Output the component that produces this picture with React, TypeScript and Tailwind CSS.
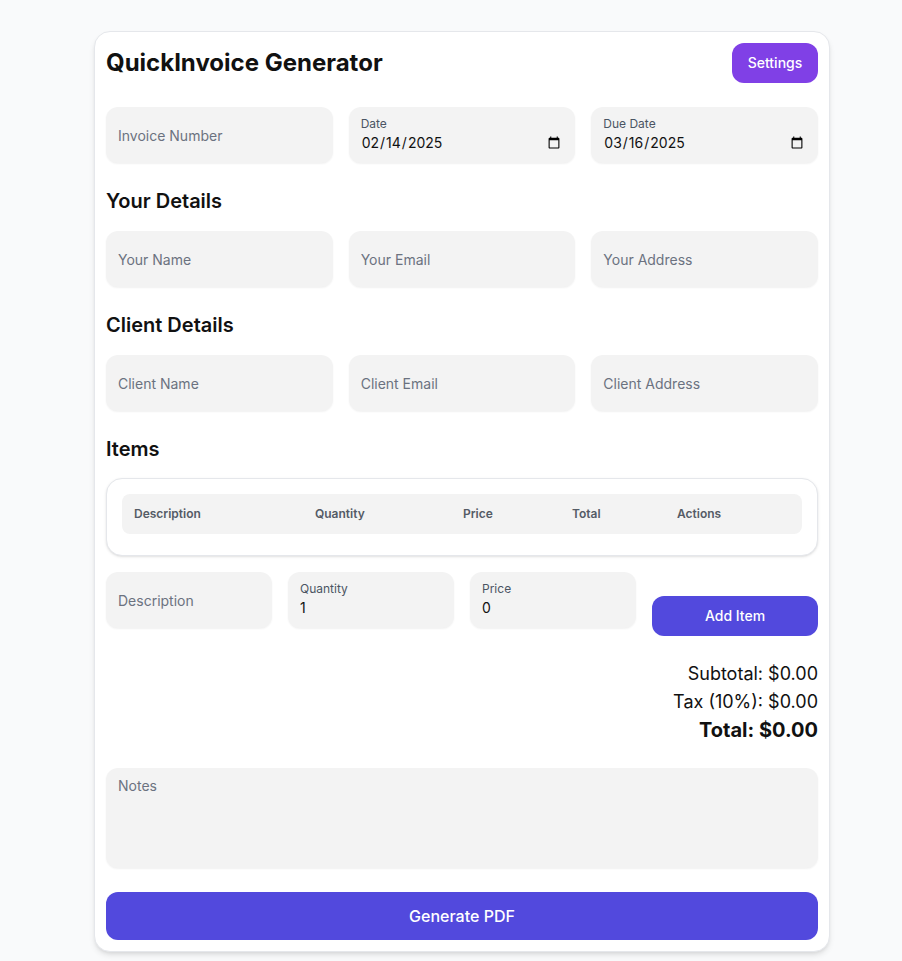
import React from "react";

const inputBox =
  "h-14 w-full rounded-xl bg-[#f3f3f3] shadow-[0_1px_2px_rgba(0,0,0,0.06)] px-3 text-sm text-[#111] placeholder:text-[#6b7280] outline-none";

function LabeledInput({ label, type, value }: { label: string; type: string; value: string }) {
  return (
    <div className="h-14 w-full rounded-xl bg-[#f3f3f3] shadow-[0_1px_2px_rgba(0,0,0,0.06)] px-3 pt-[9px] flex flex-col gap-[1px]">
      <label className="text-xs leading-4 text-[#4b5563]">{label}</label>
      <input
        type={type}
        defaultValue={value}
        className="bg-transparent text-sm leading-5 text-[#111] outline-none w-full"
      />
    </div>
  );
}

export default function App() {
  return (
    <div
      className="min-h-screen bg-[#f9fafb] pt-[31px]"
      style={{ fontFamily: "Inter, 'Noto Sans', sans-serif" }}
    >
      <div className="ml-[94px] w-[736px] rounded-2xl bg-white border border-[#e5e7eb] shadow-md px-[11px] pt-[11px] pb-[11px] flex flex-col gap-6">
        <div className="flex items-center justify-between">
          <h1 className="text-2xl font-bold text-[#111]">QuickInvoice Generator</h1>
          <button className="h-10 w-[86px] rounded-xl bg-[#8040e6] text-white text-sm font-medium">
            Settings
          </button>
        </div>

        <div className="grid grid-cols-3 gap-4">
          <input className={inputBox} placeholder="Invoice Number" />
          <LabeledInput label="Date" type="date" value="2025-02-14" />
          <LabeledInput label="Due Date" type="date" value="2025-03-16" />
        </div>

        <div className="flex flex-col gap-4">
          <h2 className="text-xl font-semibold text-[#111]">Your Details</h2>
          <div className="grid grid-cols-3 gap-4">
            <input className={inputBox} placeholder="Your Name" />
            <input className={inputBox} placeholder="Your Email" />
            <input className={inputBox} placeholder="Your Address" />
          </div>
        </div>

        <div className="flex flex-col gap-4">
          <h2 className="text-xl font-semibold text-[#111]">Client Details</h2>
          <div className="grid grid-cols-3 gap-4">
            <input className={inputBox} placeholder="Client Name" />
            <input className={inputBox} placeholder="Client Email" />
            <input className={inputBox} placeholder="Client Address" />
          </div>
        </div>

        <div className="flex flex-col gap-4">
          <h2 className="text-xl font-semibold text-[#111] -mb-[1px]">Items</h2>
          <div className="rounded-2xl border border-[#e5e7eb] bg-white shadow-sm p-[15px] pb-[21px]">
            <div className="grid grid-cols-[181px_148px_109px_105px_137px] h-10 items-center rounded-lg bg-[#f3f3f3] text-xs font-semibold text-[#555b66]">
              <div className="px-3">Description</div>
              <div className="px-3">Quantity</div>
              <div className="px-3">Price</div>
              <div className="px-3">Total</div>
              <div className="px-3">Actions</div>
            </div>
          </div>
          <div className="grid grid-cols-4 gap-4">
            <input className={inputBox} placeholder="Description" />
            <LabeledInput label="Quantity" type="number" value="1" />
            <LabeledInput label="Price" type="number" value="0" />
            <button className="mt-6 h-10 rounded-xl bg-[#5249dd] text-white text-sm font-medium">
              Add Item
            </button>
          </div>
        </div>

        <div className="flex flex-col items-end text-[#111]">
          <div className="text-lg leading-7">Subtotal: $0.00</div>
          <div className="text-lg leading-7">Tax (10%): $0.00</div>
          <div className="text-xl leading-7 font-bold">Total: $0.00</div>
        </div>

        <textarea
          className="h-[100px] w-full resize-none rounded-xl bg-[#f3f3f3] shadow-[0_1px_2px_rgba(0,0,0,0.06)] px-3 py-2 text-sm text-[#111] placeholder:text-[#6b7280] outline-none"
          placeholder="Notes"
        />

        <button className="h-12 w-full rounded-xl bg-[#5249dd] text-white text-base font-medium">
          Generate PDF
        </button>
      </div>
    </div>
  );
}
